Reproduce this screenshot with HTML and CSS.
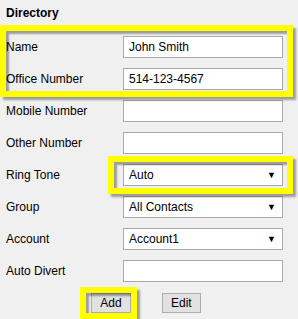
FILE: index.html
```html
<!DOCTYPE html>
<html lang="en">

<head>
    <meta charset="UTF-8">
    <title>Directory</title>
    <link rel="stylesheet" href="styles.css">
</head>

<body>

<section class="directory">
    <h2>Directory</h2>
    <form class="contact-form">
        <div class="form-row">
            <label for="name">Name</label>
            <input type="text" id="name" value="John Smith">
        </div>
        <div class="form-row">
            <label for="office">Office Number</label>
            <input type="text" id="office" value="514-123-4567">
        </div>
        <div class="form-row">
            <label for="mobile">Mobile Number</label>
            <input type="text" id="mobile">
        </div>
        <div class="form-row">
            <label for="other">Other Number</label>
            <input type="text" id="other">
        </div>
        <div class="form-row">
            <label for="ring">Ring Tone</label>
            <div class="select" id="ring">Auto <span class="arrow">&#9660;</span></div>
        </div>
        <div class="form-row">
            <label for="group">Group</label>
            <div class="select" id="group">All Contacts <span class="arrow">&#9660;</span></div>
        </div>
        <div class="form-row">
            <label for="account">Account</label>
            <div class="select" id="account">Account1 <span class="arrow">&#9660;</span></div>
        </div>
        <div class="form-row">
            <label for="divert">Auto Divert</label>
            <input type="text" id="divert">
        </div>
        <div class="buttons">
            <button type="button" class="btn">Add</button>
            <button type="button" class="btn">Edit</button>
        </div>
    </form>
</section>

<!-- highlight frames drawn over the form -->
<div class="frame frame-numbers"></div>
<div class="frame frame-ring"></div>
<div class="frame frame-add"></div>

</body>

</html>
```

FILE: styles.css
```css
* {
    margin: 0;
    padding: 0;
    box-sizing: border-box;
}

body {
    font-family: 'Liberation Sans', Arial, sans-serif;
    font-size: 12px;
    color: #000;
    background-color: #f0f0f0;
    width: 298px;
    height: 319px;
    overflow: hidden;
    position: relative;
}

.directory {
    padding: 6px 0 0 6px;
}

.directory h2 {
    font-size: 12px;
    font-weight: bold;
    line-height: 15px;
    height: 30px;
}

.contact-form {
    display: flex;
    flex-direction: column;
    gap: 10px;
}

.form-row {
    display: grid;
    grid-template-columns: 117px 160px;
    align-items: center;
    height: 22px;
}

.form-row input,
.form-row .select {
    height: 22px;
    width: 160px;
    border: 1px solid #a9a9a9;
    background-color: #fff;
    font-family: inherit;
    font-size: 12px;
    padding: 0 5px;
    color: #000;
}

.form-row .select {
    display: flex;
    align-items: center;
    justify-content: space-between;
}

.select .arrow {
    font-size: 9px;
    margin-right: 1px;
}

.buttons {
    display: flex;
    gap: 31px;
    padding-left: 85px;
    margin-top: 1px;
}

.btn {
    height: 20px;
    padding: 0 8px;
    min-width: 36px;
    font-family: inherit;
    font-size: 12px;
    background-color: #e1e1e1;
    border: 1px solid #adadad;
    color: #000;
}

.btn:first-child {
    width: 40px;
}

.frame {
    position: absolute;
    border: 6px solid #ffff00;
    box-shadow: 3px 3px 2px rgba(0, 0, 0, 0.35), inset 3px 3px 2px rgba(0, 0, 0, 0.35);
}

.frame-numbers {
    left: 0;
    top: 25px;
    width: 293px;
    height: 72px;
}

.frame-ring {
    left: 108px;
    top: 156px;
    width: 185px;
    height: 38px;
}

.frame-add {
    left: 80px;
    top: 287px;
    width: 57px;
    height: 32px;
}
```
